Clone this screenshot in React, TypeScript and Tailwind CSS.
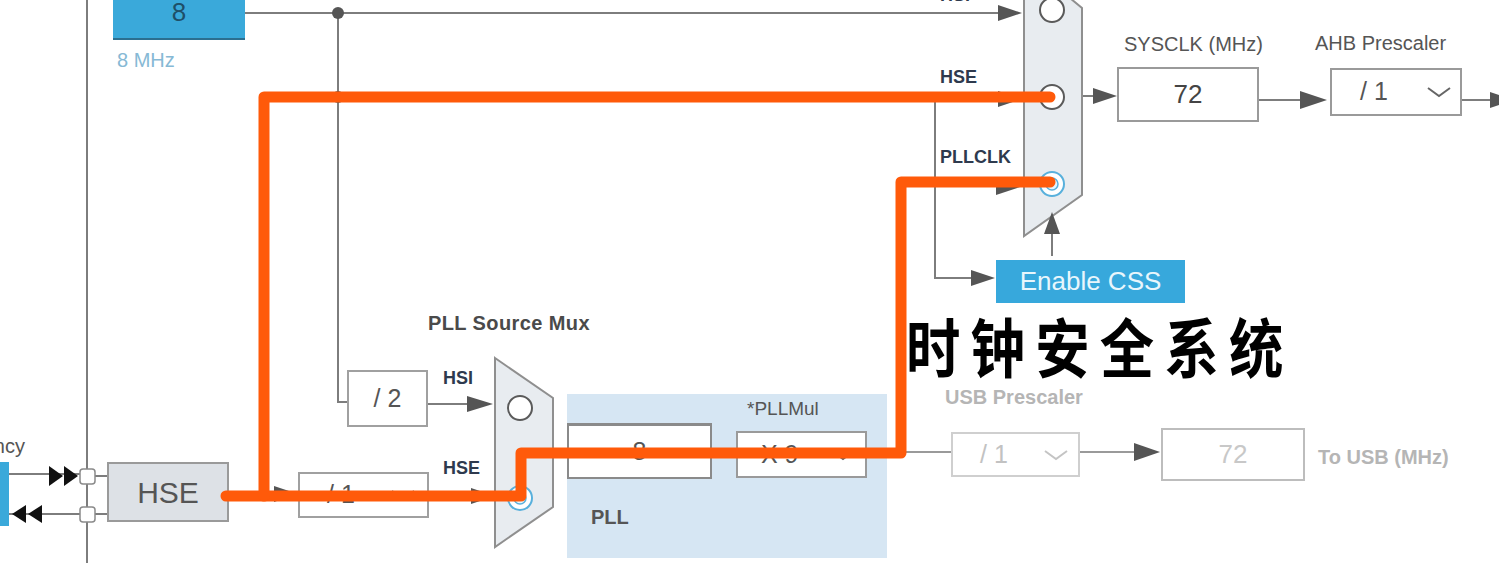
const GRAY = "#7d7d7d";
const HEAD = "#555";

type Pt = { x: number; y: number };

const headRight = ({ x, y }: Pt, len = 24, half = 8) =>
  `${x - len},${y - half} ${x},${y} ${x - len},${y + half}`;
const headUp = ({ x, y }: Pt, len = 22, half = 8) =>
  `${x - half},${y + len} ${x},${y} ${x + half},${y + len}`;

const Chevron = ({ color = "#666" }: { color?: string }) => (
  <svg width="24" height="12" viewBox="0 0 24 12" className="shrink-0">
    <polyline points="1,2 12,10 23,2" fill="none" stroke={color} strokeWidth="2" />
  </svg>
);

// label centred on cy, placed from its left edge
const Label = ({
  x,
  cy,
  size,
  className,
  children,
}: {
  x: number;
  cy: number;
  size: number;
  className: string;
  children: React.ReactNode;
}) => (
  <div
    className={`absolute leading-none whitespace-nowrap ${className}`}
    style={{ left: x, top: cy - size / 2, fontSize: size }}
  >
    {children}
  </div>
);

const Wires = () => (
  <svg width="1499" height="563" className="absolute inset-0">
    <g stroke={GRAY} strokeWidth="2" fill="none">
      {/* left bus */}
      <path d="M87 0 V563" />
      <path d="M9 474 H80 M9 514 H80 M95 476 H107 M95 514 H107" />
      {/* HSI feed */}
      <path d="M245 13 H1000" />
      <path d="M338 13 V402 H347" />
      <path d="M428 404 H472" />
      {/* HSE feeds */}
      <path d="M229 494 H278" />
      <path d="M430 496 H475" />
      <path d="M338 97 H1000" />
      <path d="M935 97 V278 H972" />
      <path d="M900 186 H1000" />
      <path d="M1052 256 V232" />
      {/* outputs */}
      <path d="M1082 96 H1095" />
      <path d="M1259 100 H1303" />
      <path d="M1462 100 H1499" />
      <path d="M553 452 H567" />
      <path d="M867 452 H951" stroke="#9a9a9a" />
      <path d="M1080 452 H1138" stroke="#9a9a9a" />
    </g>

    {/* external crystal block, cut by the left edge */}
    <rect x="-10" y="462" width="19" height="64" fill="#3aa9da" />

    {/* muxes */}
    <polygon points="495,358 553,398 553,507 495,547" fill="#e8ecf0" stroke="#8f8f8f" strokeWidth="2" />
    <polygon points="1024,-40 1082,8 1082,195 1024,236" fill="#e8ecf0" stroke="#8f8f8f" strokeWidth="2" />

    {/* mux inputs */}
    <circle cx="520" cy="408" r="12" fill="#fff" stroke="#5a5a5a" strokeWidth="2" />
    <circle cx="520" cy="498" r="12" fill="#fff" stroke="#58b0dc" strokeWidth="2" />
    <circle cx="520" cy="498" r="6" fill="#e6f4fb" stroke="#58b0dc" strokeWidth="1.5" />
    <circle cx="1052" cy="10" r="12" fill="#fff" stroke="#5a5a5a" strokeWidth="2" />
    <circle cx="1052" cy="97" r="12" fill="#fff" stroke="#5a5a5a" strokeWidth="2" />
    <circle cx="1052" cy="184" r="12" fill="#fff" stroke="#58b0dc" strokeWidth="2" />
    <circle cx="1052" cy="184" r="6" fill="#e6f4fb" stroke="#58b0dc" strokeWidth="1.5" />

    {/* junctions */}
    <circle cx="338" cy="13" r="6" fill="#555" />
    <circle cx="338" cy="97" r="6" fill="#555" />

    {/* arrow heads */}
    <g fill={HEAD}>
      <polygon points={headRight({ x: 1022, y: 13 })} />
      <polygon points={headRight({ x: 1022, y: 99 })} />
      <polygon points={headRight({ x: 1020, y: 187 })} />
      <polygon points={headRight({ x: 995, y: 278 })} />
      <polygon points={headUp({ x: 1052, y: 212 })} />
      <polygon points={headRight({ x: 1117, y: 96 })} />
      <polygon points={headRight({ x: 1327, y: 100 }, 27, 9)} />
      <polygon points={headRight({ x: 1514, y: 100 })} />
      <polygon points={headRight({ x: 493, y: 404 }, 26, 8)} />
      <polygon points={headRight({ x: 495, y: 496 })} />
      <polygon points={headRight({ x: 298, y: 494 })} />
      <polygon points={headRight({ x: 1160, y: 452 }, 26, 9)} />
    </g>

    {/* oscillator pins */}
    <g fill="#111">
      <polygon points="49,466 63,476 49,486" />
      <polygon points="64,466 78,476 64,486" />
      <polygon points="26,505 12,514 26,523" />
      <polygon points="42,505 28,514 42,523" />
    </g>
    <rect x="80" y="469" width="15" height="15" rx="3" fill="#fff" stroke="#8a8a8a" strokeWidth="1.5" />
    <rect x="80" y="507" width="15" height="15" rx="3" fill="#fff" stroke="#8a8a8a" strokeWidth="1.5" />
  </svg>
);

const Overlay = () => (
  <svg width="1499" height="563" className="absolute inset-0 pointer-events-none">
    <g stroke="#ff5a0a" strokeWidth="11" fill="none" strokeLinejoin="round" strokeLinecap="round">
      <path d="M226 496 H521 V453 H901 V182 H1050" />
      <path d="M264 496 V97 H1050" />
    </g>
  </svg>
);

const App = () => {
  return (
    <div className="relative w-[1499px] h-[563px] overflow-hidden bg-white font-['Liberation_Sans',Arial,sans-serif]">
      {/* PLL block background */}
      <div className="absolute left-[567px] top-[394px] w-[320px] h-[164px] bg-[#d6e6f3]" />

      <Wires />

      {/* HSI oscillator */}
      <div className="absolute left-[113px] top-[-14px] w-[132px] h-[54px] bg-[#3aa9da] border-b-2 border-[#2b6f90] flex items-center justify-center text-[26px] text-[#1e4f68]">
        8
      </div>
      <Label x={117} cy={60} size={20} className="text-[#86b9d5]">
        8 MHz
      </Label>
      <div className="absolute left-[-100px] top-[436px] w-[125px] text-right text-[20px] leading-none text-[#555]">
        quency
      </div>

      {/* HSE */}
      <div className="absolute left-[107px] top-[462px] w-[122px] h-[60px] bg-[#dde1e6] border-2 border-[#9a9a9a] flex items-center justify-center text-[30px] text-[#555]">
        HSE
      </div>

      {/* dividers */}
      <div className="absolute left-[347px] top-[370px] w-[81px] h-[57px] bg-white border-2 border-[#a0a0a0] flex items-center justify-center text-[25px] text-[#555]">
        / 2
      </div>
      <div className="absolute left-[298px] top-[472px] w-[131px] h-[46px] bg-white border-2 border-[#a0a0a0] flex items-center justify-between pl-[27px] pr-[12px] text-[25px] text-[#555]">
        <span>/ 1</span>
        <Chevron />
      </div>

      {/* PLL source mux */}
      <Label x={428} cy={323} size={20} className="font-bold text-[#4a4a4a] tracking-[0.4px]">
        PLL Source Mux
      </Label>
      <Label x={443} cy={378} size={18} className="font-bold text-[#2e3a4e]">
        HSI
      </Label>
      <Label x={443} cy={468} size={18} className="font-bold text-[#2e3a4e]">
        HSE
      </Label>

      {/* PLL */}
      <div className="absolute left-[567px] top-[423px] w-[145px] h-[56px] bg-white border-2 border-t-[3px] border-[#8a8a8a] flex items-center justify-center text-[25px] text-[#555]">
        8
      </div>
      <Label x={747} cy={408} size={19} className="text-[#555]">
        *PLLMul
      </Label>
      <div className="absolute left-[736px] top-[431px] w-[131px] h-[47px] bg-white border-2 border-[#9a9a9a] flex items-center justify-between pl-[23px] pr-[10px] text-[25px] text-[#555]">
        <span>X 9</span>
        <Chevron />
      </div>
      <Label x={591} cy={517} size={20} className="font-bold text-[#555]">
        PLL
      </Label>

      {/* system clock mux */}
      <Label x={940} cy={-5} size={18} className="font-bold text-[#2e3a4e]">
        HSI
      </Label>
      <Label x={940} cy={77} size={18} className="font-bold text-[#2e3a4e]">
        HSE
      </Label>
      <Label x={940} cy={157} size={18} className="font-bold text-[#2e3a4e]">
        PLLCLK
      </Label>
      <div className="absolute left-[996px] top-[260px] w-[189px] h-[43px] bg-[#37a8dc] flex items-center justify-center text-[26px] text-[#e8f6fc]">
        Enable CSS
      </div>

      {/* SYSCLK / AHB */}
      <Label x={1124} cy={44} size={20} className="text-[#555]">
        SYSCLK (MHz)
      </Label>
      <div className="absolute left-[1117px] top-[67px] w-[142px] h-[55px] bg-white border-2 border-[#9a9a9a] flex items-center justify-center text-[26px] text-[#444]">
        72
      </div>
      <Label x={1315} cy={43} size={20} className="text-[#555]">
        AHB Prescaler
      </Label>
      <div className="absolute left-[1330px] top-[68px] w-[132px] h-[48px] bg-white border-2 border-[#9a9a9a] flex items-center justify-between pl-[28px] pr-[9px] text-[25px] text-[#555]">
        <span>/ 1</span>
        <Chevron />
      </div>

      {/* USB (disabled) */}
      <Label x={945} cy={397} size={20} className="font-bold text-[#b5b5b5]">
        USB Prescaler
      </Label>
      <div className="absolute left-[951px] top-[432px] w-[129px] h-[45px] bg-white border-2 border-[#cfcfcf] flex items-center justify-between pl-[27px] pr-[10px] text-[25px] text-[#c2c2c2]">
        <span>/ 1</span>
        <Chevron color="#c4c4c4" />
      </div>
      <div className="absolute left-[1161px] top-[428px] w-[144px] h-[53px] bg-white border-2 border-[#bdbdbd] flex items-center justify-center text-[26px] text-[#c8c8c8]">
        72
      </div>
      <Label x={1318} cy={457} size={20} className="font-bold text-[#b5b5b5]">
        To USB (MHz)
      </Label>

      <Overlay />

      {/* caption */}
      <div className="absolute left-[906px] top-[312px] text-[64px] leading-none font-bold text-black tracking-[12px] scale-x-85 origin-left whitespace-nowrap font-['Noto_Sans_CJK_SC',sans-serif]">
        时钟安全系统
      </div>
    </div>
  );
};

export default App;
